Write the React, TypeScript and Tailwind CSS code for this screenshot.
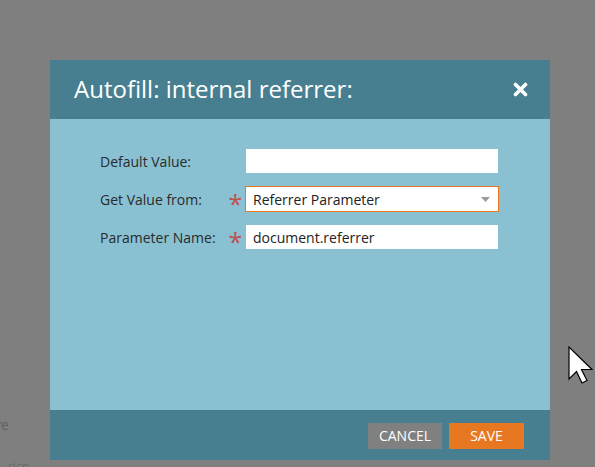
import React from 'react';

const font = { fontFamily: '"Open Sans", "Noto Sans", sans-serif' };

const Row: React.FC<{ label: string; required?: boolean; children: React.ReactNode }> = ({ label, required, children }) => (
  <div className="flex items-center h-[26px]">
    <div className="w-[126px] text-[14px] text-[#2b2b2b]">{label}</div>
    <div className="w-[19px] text-[25px] leading-none text-[#c0504d] pt-[8px] text-center">{required ? '*' : ''}</div>
    {children}
  </div>
);

export default function App() {
  return (
    <div className="relative w-[595px] h-[467px] bg-[#7f7f7f] overflow-hidden pl-[50px] pt-[60px]" style={font}>
      {/* background page text peeking out */}
      <div className="absolute left-[-6px] top-[414px] text-[14px] text-[#5f5f5f]">ve</div>
      <div className="absolute left-[8px] top-[458px] text-[12px] text-[#6a6a6a]">ricn</div>

      <div className="w-[500px] h-[400px] flex flex-col">
        <div className="h-[59px] bg-[#477f91] flex items-center justify-between pl-[24px] pr-[22px]">
          <h2 className="text-[24px] text-white pb-[2px]">Autofill: internal referrer:</h2>
          <svg width="15" height="15" viewBox="0 0 15 15" className="mb-[1px]">
            <path d="M2.5 2.5 L12.5 12.5 M12.5 2.5 L2.5 12.5" stroke="white" strokeWidth="3.6" strokeLinecap="round" />
          </svg>
        </div>

        <div className="flex-1 bg-[#89c1d3] pl-[50px] pt-[29px] flex flex-col gap-[12px]">
          <Row label="Default Value:">
            <div className="w-[252px] h-[24px] bg-white ml-[1px]" />
          </Row>
          <Row label="Get Value from:" required>
            <div className="w-[254px] h-[26px] bg-white border border-[#e87722] flex items-center justify-between pl-[7px] pr-[8px]">
              <span className="text-[14px] text-[#222]">Referrer Parameter</span>
              <svg width="9" height="5" viewBox="0 0 9 5"><path d="M0 0 H9 L4.5 5 Z" fill="#9a9a9a" /></svg>
            </div>
          </Row>
          <Row label="Parameter Name:" required>
            <div className="w-[252px] h-[24px] bg-white ml-[1px] flex items-center pl-[7px]">
              <span className="text-[14px] text-[#222]">document.referrer</span>
            </div>
          </Row>
        </div>

        <div className="h-[50px] bg-[#477f91] flex items-center justify-end gap-[7px] pr-[26px] pt-[1px]">
          <button className="w-[74px] h-[26px] bg-[#808080] text-white text-[14px]">CANCEL</button>
          <button className="w-[75px] h-[26px] bg-[#e87722] text-white text-[14px]">SAVE</button>
        </div>
      </div>

      {/* mouse cursor */}
      <svg className="absolute left-[568px] top-[346px]" width="26" height="38" viewBox="0 0 26 38">
        <path d="M1 1 L1 33 L8.5 25.5 L14 37 L19 34.5 L13.5 23.5 L24 23.5 Z" fill="white" stroke="black" strokeWidth="1.2" strokeLinejoin="miter" />
      </svg>
    </div>
  );
}
